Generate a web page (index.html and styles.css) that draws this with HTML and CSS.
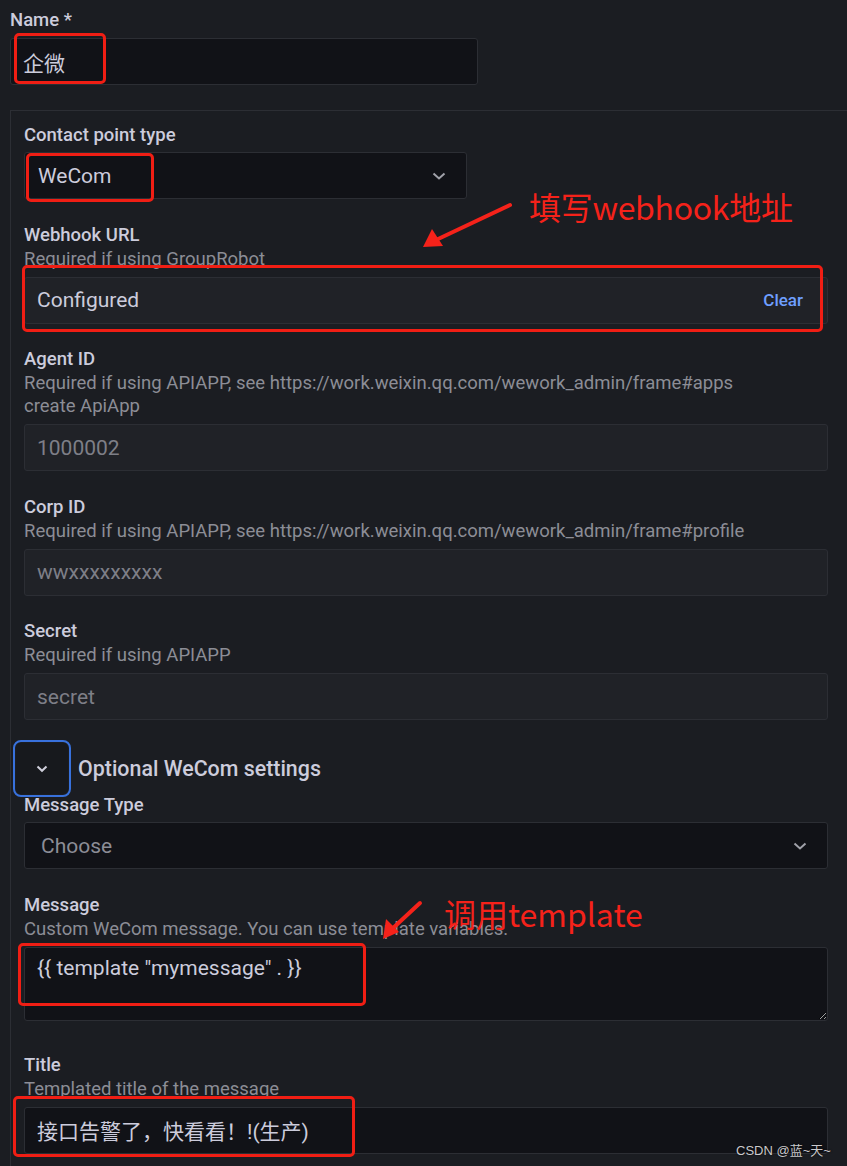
FILE: index.html
```html
<!DOCTYPE html>
<html lang="en">
<head>
    <meta charset="UTF-8">
    <title>Contact point</title>
    <link rel="stylesheet" href="styles.css">
</head>
<body>
<div class="page">
    <div class="field field-name">
        <label class="label">Name *</label>
        <input class="input input-name" type="text" value="企微">
    </div>

    <fieldset class="box">
        <div class="field">
            <label class="label">Contact point type</label>
            <div class="select select-type">
                <span class="select-value">WeCom</span>
                <svg class="chevron" width="14" height="8" viewBox="0 0 14 8"><polyline points="1.5,1.5 7,6.5 12.5,1.5"/></svg>
            </div>
        </div>

        <div class="field">
            <label class="label">Webhook URL</label>
            <div class="desc">Required if using GroupRobot</div>
            <div class="input input-soft input-row">
                <span>Configured</span>
                <span class="clear">Clear</span>
            </div>
        </div>

        <div class="field">
            <label class="label">Agent ID</label>
            <div class="desc">Required if using APIAPP, see https://work.weixin.qq.com/wework_admin/frame#apps<br>create ApiApp</div>
            <input class="input input-soft" type="text" placeholder="1000002">
        </div>

        <div class="field">
            <label class="label">Corp ID</label>
            <div class="desc">Required if using APIAPP, see https://work.weixin.qq.com/wework_admin/frame#profile</div>
            <input class="input input-soft" type="text" placeholder="wwxxxxxxxxx">
        </div>

        <div class="field">
            <label class="label">Secret</label>
            <div class="desc">Required if using APIAPP</div>
            <input class="input input-soft" type="text" placeholder="secret">
        </div>

        <div class="collapse">
            <button class="collapse-btn">
                <svg width="12" height="8" viewBox="0 0 12 8"><polyline points="1.5,1.5 6,5.8 10.5,1.5"/></svg>
            </button>
            <span class="collapse-title">Optional WeCom settings</span>
        </div>

        <div class="field">
            <label class="label">Message Type</label>
            <div class="select">
                <span class="select-placeholder">Choose</span>
                <svg class="chevron" width="14" height="8" viewBox="0 0 14 8"><polyline points="1.5,1.5 7,6.5 12.5,1.5"/></svg>
            </div>
        </div>

        <div class="field field-area">
            <label class="label">Message</label>
            <div class="desc">Custom WeCom message. You can use template variables.</div>
            <textarea class="input textarea">{{ template "mymessage" . }}</textarea>
        </div>

        <div class="field">
            <label class="label">Title</label>
            <div class="desc">Templated title of the message</div>
            <input class="input" type="text" value="接口告警了，快看看！!(生产)">
        </div>
    </fieldset>
</div>

<!-- annotations drawn on top of the screenshot -->
<div class="mark mark-name"></div>
<div class="mark mark-type"></div>
<div class="mark mark-webhook"></div>
<div class="mark mark-message"></div>
<div class="mark mark-title"></div>

<div class="note note-webhook">填写webhook地址</div>
<div class="note note-template">调用template</div>

<svg class="arrows" width="847" height="1166" viewBox="0 0 847 1166">
    <line x1="510" y1="205" x2="436" y2="240"/>
    <polygon points="423,247 432,229 443,246"/>
    <line x1="420" y1="903" x2="392" y2="929"/>
    <polygon points="383,939 386,919 399,932"/>
</svg>

<div class="watermark">CSDN @蓝~天~</div>
</body>
</html>
```

FILE: styles.css
```css
html, body {
    margin: 0;
    padding: 0;
}

body {
    background: #1b1d22;
    color: #ccccdc;
    font-family: Roboto, "Noto Sans CJK SC", sans-serif;
    width: 847px;
    height: 1166px;
    overflow: hidden;
    position: relative;
    color-scheme: dark;
}

.page {
    padding: 9px 0 0 10px;
}

.label {
    display: block;
    font-size: 18.5px;
    font-weight: 500;
    line-height: 22px;
    color: #ccccdc;
}

.desc {
    margin-top: 2px;
    font-size: 18.5px;
    line-height: 23px;
    color: #8c8d96;
}

.field {
    display: flex;
    flex-direction: column;
    margin-bottom: 24.5px;
}

.field-name {
    margin-bottom: 0;
}

.input {
    box-sizing: border-box;
    width: 804px;
    height: 47px;
    margin: 6px 0 0;
    padding: 0 12px;
    background: #111217;
    border: 1px solid #2c2e34;
    border-radius: 3px;
    color: #ccccdc;
    font: 21px Roboto, "Noto Sans CJK SC", sans-serif;
    outline: none;
}

.input::placeholder {
    color: #7e7f87;
}

.input-name {
    width: 468px;
    margin-top: 7px;
}

.input-soft {
    background: #202227;
}

.input-row {
    display: flex;
    align-items: center;
    justify-content: space-between;
    padding-right: 24px;
}

.clear {
    color: #6e9fff;
    font-size: 17px;
    font-weight: 500;
}

.box {
    margin: 25px 0 0;
    padding: 13px 0 0 13px;
    border: 1px solid #2c2e34;
    border-right: 0;
    border-bottom: 0;
}

.select {
    box-sizing: border-box;
    display: flex;
    align-items: center;
    justify-content: space-between;
    width: 804px;
    height: 47px;
    margin-top: 6px;
    padding: 0 20px 0 13px;
    background: #111217;
    border: 1px solid #2c2e34;
    border-radius: 3px;
    font-size: 21px;
}

.select-type {
    width: 443px;
}

.select-placeholder {
    color: #8c8d96;
    padding-left: 3px;
}

.chevron polyline,
.collapse-btn polyline {
    fill: none;
    stroke: #a0a1a9;
    stroke-width: 2;
}

.collapse {
    display: flex;
    align-items: center;
    height: 51px;
    margin: -1.5px 0 0 -8px;
}

.collapse-btn {
    width: 52px;
    height: 51px;
    margin-right: 10px;
    padding: 0;
    display: flex;
    align-items: center;
    justify-content: center;
    background: #17191d;
    border: 0;
    border-radius: 5px;
    outline: 2px solid #3871dc;
    outline-offset: 1px;
}

.collapse-btn polyline {
    stroke: #d0d0dc;
}

.collapse-title {
    font-size: 21.4px;
    font-weight: 500;
    color: #ccccdc;
}

.field-area {
    margin-bottom: 33px;
}

.textarea {
    display: block;
    height: 74px;
    padding: 9px 12px;
    line-height: 22px;
    resize: vertical;
}

/* red annotation boxes */
.mark {
    position: absolute;
    border: 3px solid #f01e14;
    border-radius: 5px;
    box-sizing: border-box;
}

.mark-name {
    left: 14px;
    top: 33px;
    width: 92px;
    height: 51px;
}

.mark-type {
    left: 26px;
    top: 153px;
    width: 128px;
    height: 49px;
}

.mark-webhook {
    left: 22px;
    top: 265px;
    width: 801px;
    height: 67px;
}

.mark-message {
    left: 18px;
    top: 943px;
    width: 348px;
    height: 63px;
}

.mark-title {
    left: 13px;
    top: 1096px;
    width: 342px;
    height: 61px;
}

.note {
    position: absolute;
    color: #f5221a;
    font-family: "Noto Sans CJK SC", sans-serif;
    font-size: 32px;
    line-height: 40px;
}

.note-webhook {
    left: 529px;
    top: 186px;
    letter-spacing: -0.3px;
}

.note-template {
    left: 444px;
    top: 893px;
}

.arrows {
    position: absolute;
    left: 0;
    top: 0;
    pointer-events: none;
}

.arrows line {
    stroke: #f5221a;
    stroke-width: 4;
    stroke-linecap: round;
}

.arrows polygon {
    fill: #f5221a;
}

.watermark {
    position: absolute;
    left: 736px;
    top: 1140px;
    font-family: "Liberation Sans", "Noto Sans CJK SC", sans-serif;
    font-size: 13px;
    color: #c9c9cc;
    text-shadow: 0 0 2px #000;
}
```
